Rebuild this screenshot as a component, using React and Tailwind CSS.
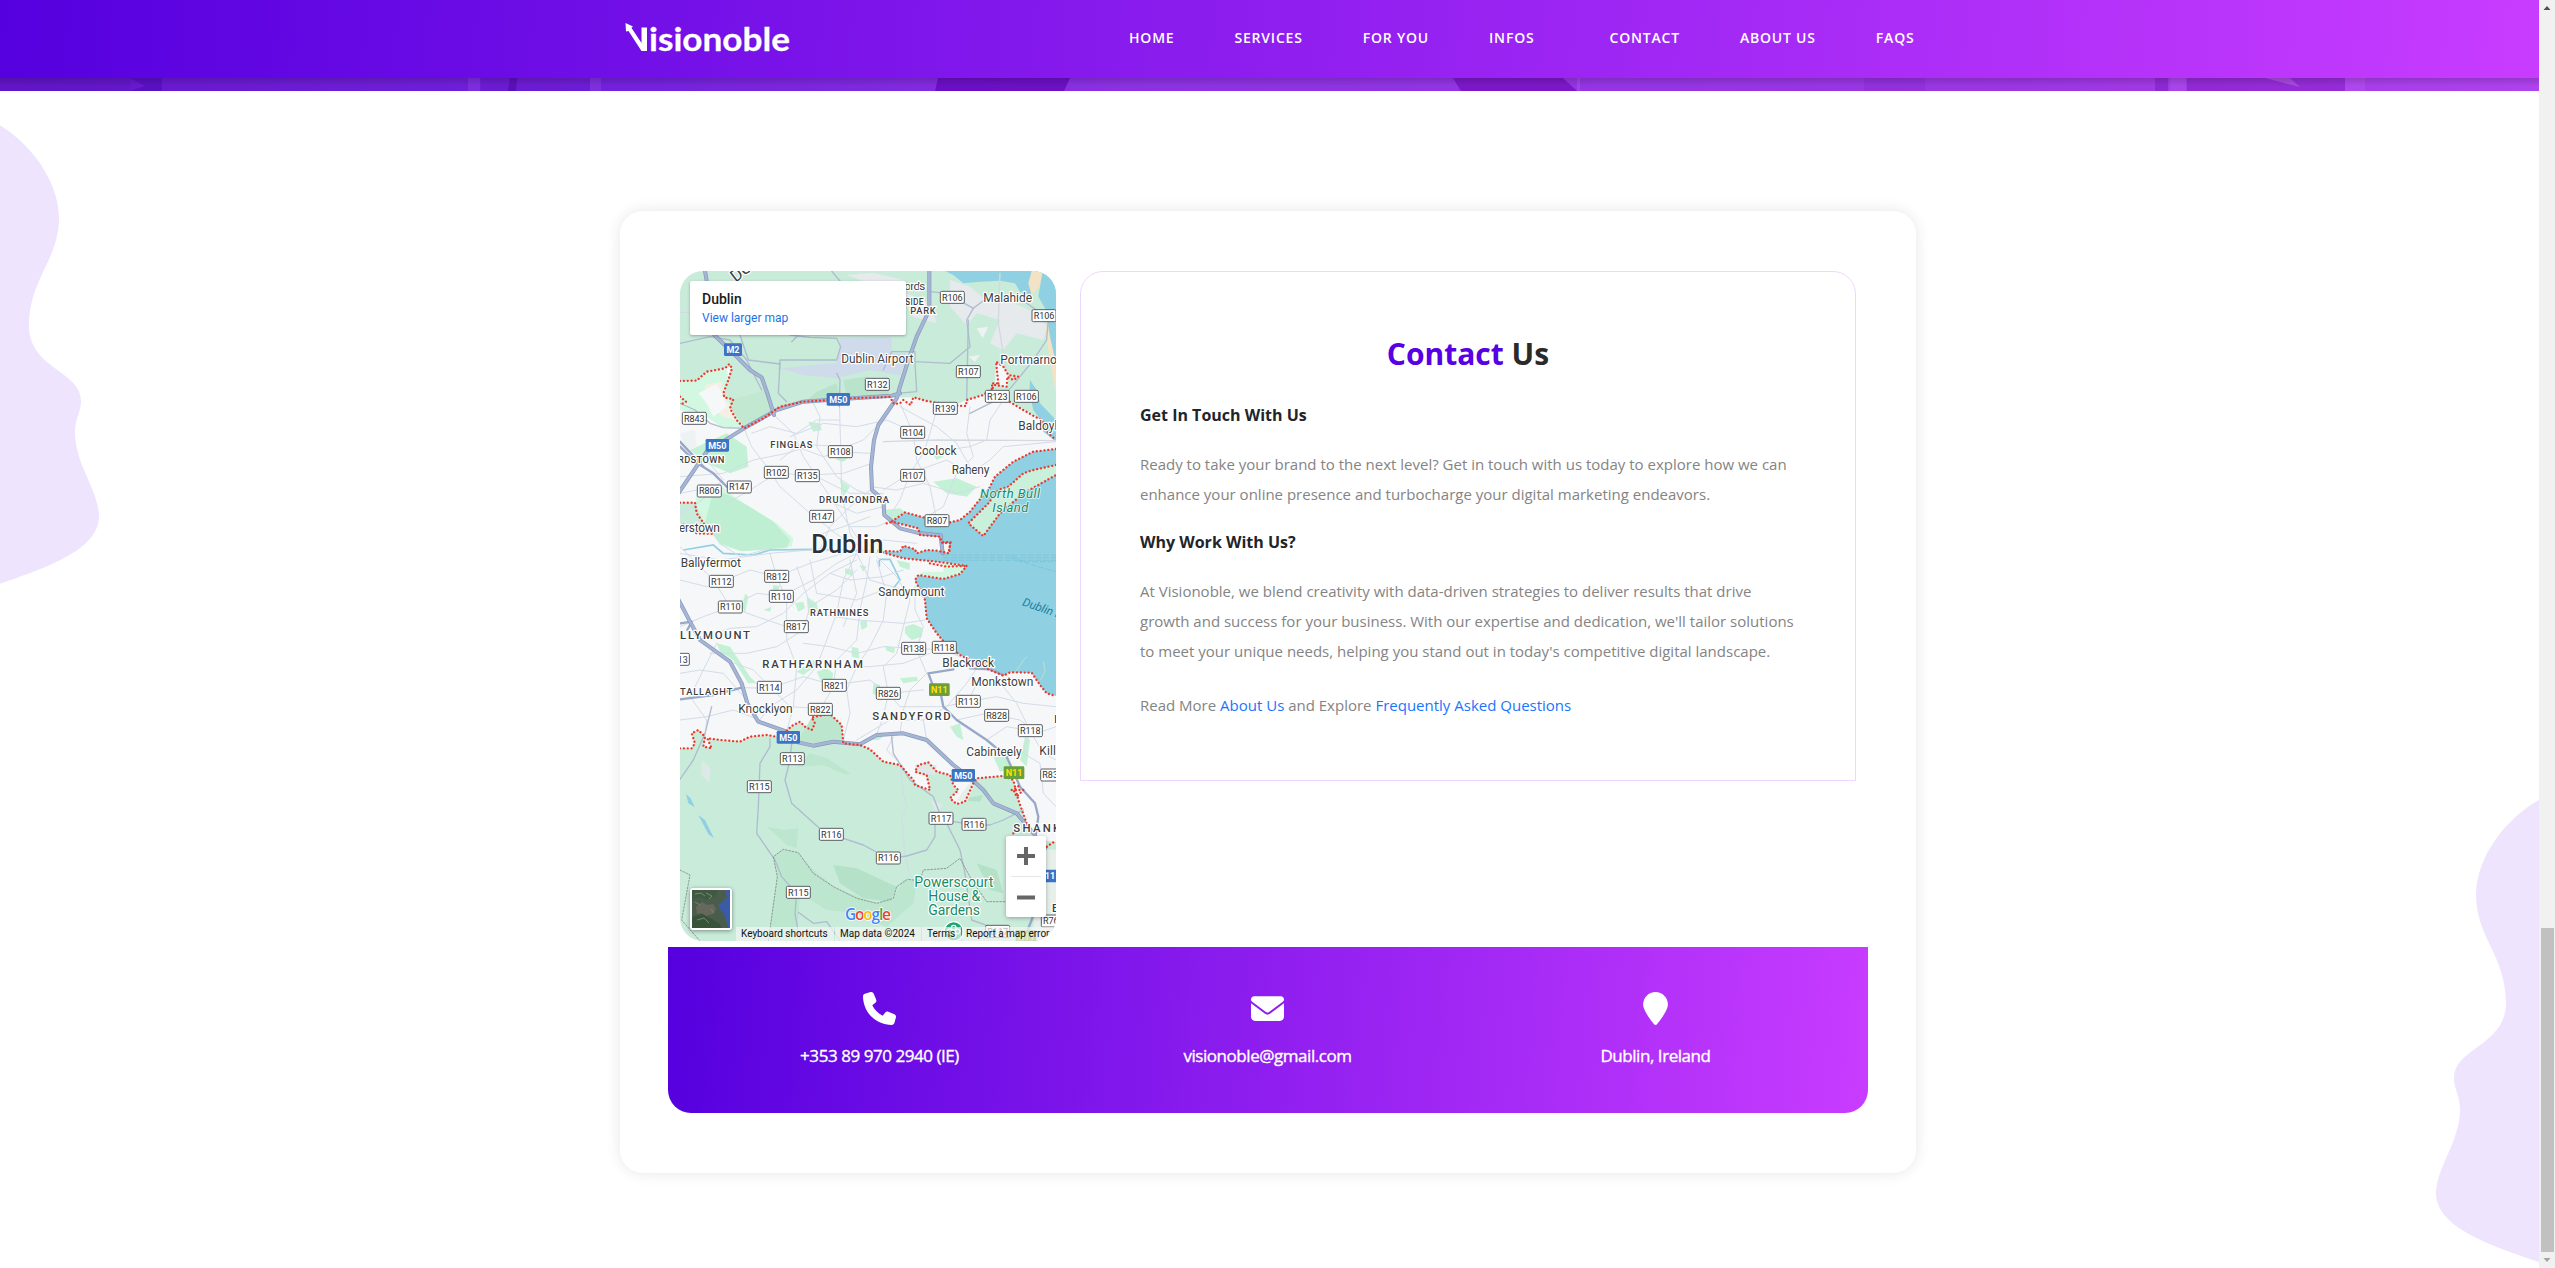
import React from "react";
import { FaPhone, FaEnvelope, FaLocationPin } from "react-icons/fa6";

const NAV = ["HOME", "SERVICES", "FOR YOU", "INFOS", "CONTACT", "ABOUT US", "FAQS"];

const ROUTES = [
  [847, 112, "R106"], [1122, 167, "R106"], [895, 335, "R107"], [622, 373, "R132"],
  [982, 409, "R123"], [1069, 409, "R106"], [826, 445, "R139"], [73, 475, "R843"],
  [728, 517, "R104"], [511, 575, "R108"], [319, 637, "R102"], [412, 647, "R135"],
  [728, 646, "R107"], [118, 693, "R806"], [208, 681, "R147"], [455, 769, "R147"],
  [801, 782, "R807"], [320, 949, "R812"], [154, 964, "R112"], [334, 1009, "R110"],
  [181, 1041, "R110"], [379, 1100, "R817"], [731, 1165, "R138"], [823, 1162, "R118"],
  [22, 1198, "R113"], [298, 1282, "R114"], [493, 1276, "R821"], [655, 1300, "R826"],
  [895, 1324, "R113"], [451, 1348, "R822"], [980, 1366, "R828"], [1081, 1412, "R118"],
  [367, 1496, "R113"], [268, 1580, "R115"], [1148, 1545, "R837"], [813, 1675, "R117"],
  [912, 1693, "R116"], [484, 1723, "R116"], [655, 1794, "R116"], [385, 1897, "R115"],
  [1150, 1983, "R761"], [983, 2014, "R117"],
];

const MOTORWAYS = [
  [189, 269, "M2", 54], [505, 418, "M50", 70], [142, 556, "M50", 70],
  [355, 1432, "M50", 70], [880, 1546, "M50", 70], [1128, 1848, "M11", 70],
];

// text, left, width, vertical centre, size
const TOWNS = [
  ["ords", 703, 63, 76, 35], ["Malahide", 940, 146, 112, 36], ["Dublin Airport", 514, 216, 296, 36],
  ["Portmarnock", 991, 206, 298, 36], ["Baldoyle", 1045, 136, 497, 36], ["Coolock", 733, 127, 571, 36],
  ["Raheny", 845, 113, 628, 36], ["erstown", 27, 123, 802, 36], ["Ballyfermot", 32, 181, 907, 36],
  ["Sandymount", 625, 198, 994, 36], ["Blackrock", 817, 155, 1209, 36], ["Monkstown", 904, 186, 1264, 36],
  ["Knocklyon", 205, 163, 1347, 36], ["Cabinteely", 889, 166, 1475, 36], ["Killiney", 1108, 116, 1472, 36],
];
const DISTRICTS = [
  ["SIDE", 705, 56, 126, 26], ["PARK", 721, 76, 153, 28], ["FINGLAS", 301, 126, 555, 28],
  ["RDSTOWN", 24, 139, 600, 28], ["DRUMCONDRA", 447, 210, 720, 28], ["RATHMINES", 420, 175, 1057, 28],
  ["LLYMOUNT", 30, 210, 1126, 34], ["RATHFARNHAM", 277, 302, 1212, 34], ["TALLAGHT", 30, 157, 1296, 28],
  ["SANDYFORD", 607, 235, 1368, 34], ["SHANKILL", 1030, 208, 1705, 34], ["BRAY", 1146, 100, 1943, 34],
  ["D", 1153, 24, 1377, 34],
];

const COAST =
  "M1158 567L1090 575L1030 605L975 650L955 690L940 705L900 755L870 780L840 787L770 775L705 757L665 785L745 805L750 825L810 830L815 848L840 850L838 880L800 872L770 870L740 880L735 868L700 857L690 875L620 872L700 895L800 905L890 918L870 942L820 957L745 945L735 960L765 1020L770 1075L800 1120L830 1155L870 1185L960 1230L1000 1247L1020 1237L1085 1238L1110 1275L1130 1300L1158 1308";
const BULL = "M1158 615L1090 630L1060 640L1015 680L985 690L955 730L895 790L940 828L990 760L1060 700L1158 645";
const SOUTH_EDGE =
  "M30 1465L65 1465L75 1450L65 1420L85 1410L105 1430L100 1460L125 1465L112 1435L150 1440L210 1445L240 1430L290 1425L330 1432L365 1398L390 1385L405 1400L425 1410L435 1390L425 1372L480 1362L515 1395L520 1450L570 1455L600 1468L640 1505L690 1515L730 1560L735 1575L780 1590L770 1545L735 1535L745 1515L775 1507L800 1535L840 1545L850 1575L865 1590L840 1615L860 1632L885 1625L910 1570L920 1555L1000 1548L1030 1560L1045 1620L1070 1690";
const NORTH_EDGE =
  "M30 363L80 362L110 335L165 325L178 312L186 325L175 360L160 400L163 412L190 418L180 445L200 480L222 505L280 475L330 440L400 425L470 421L540 415L660 411L672 432L690 430L700 420L722 435L730 412L770 423L850 437L888 438L890 420L940 405L968 385L965 370L985 370";

const MAJOR = [
  "M25 700L110 575L222 505L320 450L400 425L505 418L665 407L690 400",
  "M105 33L125 150L133 225L200 290L240 330L275 352L292 400L312 465",
  "M778 33L778 150L740 230L712 310L690 380L680 415L625 495L612 540L603 620L606 690L640 720L643 765L690 805L750 820L812 826L818 880",
  "M25 1018L60 1085L90 1140L180 1205L215 1270L232 1330L265 1385L350 1415L385 1447L430 1457L490 1445L570 1453L620 1425L700 1420L770 1440L850 1515L900 1553L940 1590L970 1630L1040 1660L1095 1725",
];
const MEDIUM = [
  "M850 1228L775 1240L790 1280L812 1300L820 1340L860 1380L950 1440L1010 1490L1050 1580L1095 1630L1105 1670L1095 1740",
  "M30 1318L130 1305L215 1283", "M30 560L75 605L130 640L170 680", "M30 545L100 620",
  "M900 1225L960 1228L1000 1245", "M1130 1760L1110 1800L1120 1860L1085 1980L1060 2043", "M30 1090L65 1085L52 1110",
];
const REGIONAL = [
  "M30 250L120 230L180 240L230 300L275 390", "M210 225L235 300L330 312", "M360 225L420 232L500 235L512 260L500 300L330 300L328 330",
  "M330 310L325 400L350 425", "M365 245L400 210L445 170L540 180", "M680 400L740 395L735 310L735 275L665 275L640 330",
  "M735 305L840 310L900 260L890 180L910 145L830 100L780 95", "M910 145L950 115L1040 110L1100 150L1135 175L1130 240L1090 300L1050 350L1000 410L900 460",
  "M895 180L890 420", "M30 430L75 450L120 490L160 503L222 505", "M485 33L520 75M500 340L510 360L508 440",
  "M300 1435L300 1460L270 1510L265 1640L260 1720L315 1800L335 1850L380 1900L375 1960L390 2043",
  "M365 1450L360 1500L345 1560L365 1630L460 1715L580 1755L655 1795L710 1788L770 1770L795 1730L795 1670L830 1690L870 1770L885 1840L905 1980L960 2000",
  "M665 1430L670 1480L720 1560L790 1610L813 1670L850 1685L900 1692L960 1695L1000 1680L1060 1650",
  "M30 1558L70 1500L105 1420L125 1340", "M385 1957L430 1990L470 1985L510 2043",
];
const STREETS = [
  "M222 505L245 560L290 620L330 680L420 760L510 830L570 860", "M312 465L370 520L400 590L440 650L500 740L560 830", "M508 420L512 560L515 700L540 820L570 870",
  "M620 500L580 540L530 560L430 555L350 580L250 600L160 640L30 650", "M605 610L520 640L420 645L320 640L240 690L170 730", "M730 515L650 480L560 500L460 490L360 530",
  "M690 430L730 520L740 600L780 680L800 780", "M640 690L720 640L830 600L900 640L960 600L1000 560L1158 545", "M690 440L800 500L860 550L900 620L940 650",
  "M600 680L680 690L760 670L860 700L930 680", "M800 450L780 520L760 580L720 640L690 720L650 780", "M900 440L890 520L910 590L860 640L820 740L770 770",
  "M1000 420L960 480L950 540L900 560L830 570", "M30 880L150 900L300 880L420 870L560 875L640 880", "M110 790L150 850L210 890L300 865",
  "M30 960L110 980L154 965L240 930L320 950L420 910L520 880", "M30 860L70 900L130 960L180 1040L260 1070L350 1100", "M30 1100L100 1070L181 1041L260 1000L334 1008L430 960L500 910L560 880",
  "M90 1140L180 1105L260 1100L340 1060L400 1000L480 940L560 900", "M120 1180L230 1180L320 1160L400 1110L420 1040L500 990L560 930", "M180 1205L250 1230L300 1280L360 1340L440 1345",
  "M215 1283L300 1285L400 1250L490 1275L600 1260L655 1300L760 1290", "M265 1385L300 1340L380 1290L440 1220L470 1140L500 1060L520 960L560 880", "M350 1415L370 1340L380 1220L350 1140L350 1020L320 950L300 880",
  "M451 1348L490 1280L500 1200L560 1140L570 1050L590 960L600 890", "M520 1440L540 1360L530 1290L560 1220L600 1160L640 1080L650 1000L620 900", "M620 1423L640 1370L655 1300L640 1220L680 1180L700 1100L720 1020L680 950L620 890",
  "M690 1420L700 1350L720 1290L770 1240L740 1170L760 1100L735 1050L735 980", "M420 900L440 1000L560 1020L640 990L735 985", "M380 920L430 1060L560 1080L700 1090L765 1080",
  "M400 1150L480 1160L560 1180L640 1160L731 1165L823 1170L870 1190", "M30 1240L90 1230L160 1240L230 1320", "M140 1150L90 1250L60 1310L110 1380L105 1430",
  "M560 870L640 840L740 850M540 800L620 800L690 770M440 650L540 700L640 700", "M470 720L560 760L640 740M430 830L520 800L600 770M450 870L480 800L540 740L600 690",
  "M560 880L600 960L700 990M540 900L560 1000L520 1100M480 940L540 960L640 950L700 930", "M820 1340L900 1324L980 1310L1060 1330L1158 1340", "M860 1380L950 1360L1050 1380L1100 1420L1158 1400",
  "M950 1440L1010 1400L1080 1412L1120 1480L1158 1500", "M1010 1490L1060 1480L1110 1510L1120 1600L1158 1640", "M895 1324L920 1270L1000 1280L1040 1330L1080 1412L1060 1480",
  "M770 1440L760 1380L830 1340L890 1270L920 1225", "M560 1440L660 1380L760 1380M30 1380L110 1370L190 1350L270 1380", "M700 1520L650 1470L670 1430",
  "M30 700L80 690L118 693L160 660L110 600L60 600", "M30 760L70 740L120 700M245 520L300 500L380 520L440 480L508 480", "M330 600L380 560L460 590L511 575L600 580",
  "M640 720L560 690L500 650L440 560L450 470L430 430", "M780 1180L700 1210L600 1220L560 1220M655 1300L690 1340L820 1340", "M690 1515L700 1600L710 1640L695 1680L705 1780L720 1850",
];
const PARKS = [
  "M415 485L450 490L455 510L430 515Z", "M500 580L530 570L540 590L520 605L500 600Z", "M790 665L860 655L920 680L890 710L830 700Z", "M640 750L690 745L710 760L670 785Z",
  "M410 1010L440 1030L445 1055L415 1065Z", "M375 1030L400 1025L405 1045L385 1055Z", "M705 1100L730 1092L758 1105L755 1130L725 1140L705 1120Z", "M525 925L550 930L545 948L525 940Z", "M568 915L590 920L580 935Z",
  "M545 1160L565 1165L568 1195L545 1190Z", "M570 1085L590 1080L592 1100L575 1110Z", "M645 1157L675 1165L672 1180L650 1172Z", "M440 1235L470 1225L490 1240L485 1270L455 1265Z",
  "M610 1270L630 1275L625 1310L608 1300Z", "M310 975L330 978L325 992L308 990Z", "M225 1000L235 1010L225 1060L218 1040Z", "M140 1150L180 1160L240 1250L260 1270L235 1270L190 1200L150 1175Z",
  "M600 1440L620 1420L640 1430L625 1440Z", "M970 1490L1010 1490L1030 1525L990 1535Z", "M690 1255L740 1250L745 1262L700 1270Z", "M790 585L815 575L820 590L800 600Z",
  "M60 570L170 520L230 560L235 620L180 640L110 610Z", "M380 1235L430 1200L440 1215L400 1245Z", "M840 1400L870 1390L880 1440L860 1430Z", "M1065 1430L1080 1440L1070 1520L1050 1500Z", "M510 660L540 680L520 710Z", "M280 1050L305 1040L300 1055Z",
  "M680 900L720 910L718 930L690 920Z",
];

function MapText({ items, className, haloWidth = 7 }) {
  return items.map(([text, x, w, y, size]) => (
    <text
      key={text + x + y}
      x={x}
      y={y + size * 0.36}
      fontSize={size}
      textLength={w}
      strokeWidth={haloWidth}
      className={className}
    >
      {text}
    </text>
  ));
}

function CityMap() {
  return (
    <svg viewBox="30 33 1128 2010" className="block h-full w-full font-['Roboto',sans-serif]">
      <rect x="30" y="33" width="1128" height="2010" fill="#f6f7f8" />
      {/* northern countryside */}
      <path
        d="M30 33H1158V520L1100 470L1030 430L985 400L940 405L890 420L850 437L770 423L730 412L540 415L400 425L330 440L222 505L180 445L160 410L185 320L110 335L80 362L30 363Z"
        fill="#c9ebda"
      />
      <path d="M30 363L80 362L110 335L170 325L175 360L160 410L185 420L222 505L160 505L110 470L30 450Z" fill="#d2f8e1" />
      <path d="M105 375L155 365L160 410L185 440L200 480L160 470L110 430Z" fill="#f5f0e6" />
      <path d="M85 400L140 372L155 400L170 440L130 470L110 430Z" fill="#f6f7f8" />
      <path d="M180 420L290 390L310 450L222 500L180 440Z" fill="#c2e8d2" />
      <path d="M330 325L460 312L500 310L512 235L660 230L690 270L715 285L690 345L600 330L500 355L400 345Z" fill="#cfdaea" />
      <path d="M665 230L700 245L730 250L715 280L665 280ZM330 300L370 300L380 320L330 318Z" fill="#c9ebda" />
      <path d="M400 430L440 395L500 370L510 415ZM520 360L590 350L650 380L660 405L530 412Z" fill="#b9e3ca" />
      <path d="M530 45L610 38L700 60L710 100L780 130L800 190L730 170L690 110L600 70ZM840 60L900 80L960 130L1010 120L1100 160L1130 200L1120 240L1040 220L1000 270L960 250L990 180L920 160L890 195L840 140Z" fill="#e6eaed" />
      <path d="M920 205L955 200L938 235ZM895 290L930 285L915 305ZM30 520L75 510L80 560L50 570Z" fill="#edf2f3" />
      <path d="M825 33H1115L1105 75L1080 105L1050 95L1035 70L990 62L930 65L880 70L850 45Z" fill="#90d0e3" />
      <path d="M1085 33H1120L1108 80L1085 105L1075 70ZM1125 180L1145 240L1158 330V400L1145 330L1130 240Z" fill="#f3e2c4" />
      <path d="M1118 33H1158V310L1140 230L1128 150L1105 110Z" fill="#90d0e3" />
      <path d="M1080 360L1100 390L1110 430L1158 480V545L1120 515L1105 470L1090 450L1078 400Z" fill="#90d0e3" />
      <path d="M978 305L1000 320L1015 345L1012 380L975 375Z" fill="#f6f7f8" />
      {/* parkland inside the city */}
      <path d="M80 690L150 675L180 700L230 735L320 790L370 835L365 860L210 873L150 855L110 800L75 740Z" fill="#d2f8e1" />
      <path d="M125 710L165 700L230 735L310 785L360 840L350 864L215 874L150 850L105 790Z" fill="#bfefd2" />
      <path d="M30 728L75 728L105 795L130 822L80 820L30 790Z" fill="#c9ebda" />
      {PARKS.map((d) => (
        <path key={d} d={d} fill="#c3f1d5" />
      ))}
      {/* southern mountains */}
      <path d={SOUTH_EDGE + "L1095 1740L1158 1745V2043H30Z"} fill="#c9ebda" />
      <path d="M425 1372L480 1362L515 1395L520 1450L440 1450L385 1440Z" fill="#bce6cd" />
      <path d="M380 1520L420 1480L470 1495L540 1540L530 1545L460 1515ZM290 1700L345 1710L385 1705L380 1765L350 1755L330 1735Z" fill="#bce6cd" />
      <path d="M310 1790L340 1768L385 1778L430 1830L500 1885L620 1930L670 1915L700 1860L740 1860L730 1930L650 2000L560 1960L470 1950L390 1900L380 2043H295L322 1850Z" fill="#bce6cd" />
      <path d="M490 1815L560 1825L680 1880L660 1925L580 1915L510 1870ZM920 1810L980 1830L1000 1900L960 1890ZM860 1620L940 1605L930 1625Z" fill="#b4e1c8" />
      <path d="M95 1500L122 1525L118 1570L94 1545ZM780 1620L820 1635L800 1660ZM735 1515L800 1515L795 1545L740 1540Z" fill="#dde9e6" />
      <path d="M860 1620L905 1560L915 1570L890 1628ZM1040 1760L1158 1770V2043H1080L1120 1850Z" fill="#e6efea" />
      <path d="M48 1602L62 1615L74 1642L55 1630ZM85 1665L105 1680L132 1735L115 1722Z" fill="#90d0e3" />
      {/* sea */}
      <path d={COAST + "V567Z"} fill="#90d0e3" />
      <path d={BULL + "Z"} fill="#c9f0da" />
      <path d="M820 905L890 918L870 942L820 957L745 945L760 935L820 935Z" fill="#d2f8e1" />
      <path d="M640 877L740 895L820 900M40 870L130 855L160 880L250 885L300 870L420 868L600 872M628 898H660L690 960L670 985M628 898V920" fill="none" stroke="#90d0e3" strokeWidth="5" />
      <path d="M1035 1240L1060 1200L1072 1190M1120 1205L1125 1235L1110 1262" fill="none" stroke="#b9dfd5" strokeWidth="3" />
      <path d="M820 885H1158M820 893H1158M820 901H1158M1020 885L1070 910L1158 935M1020 893L1050 905L1158 905" fill="none" stroke="#72c1d8" strokeWidth="2" strokeDasharray="18 5" />
      {/* roads */}
      <g fill="none" strokeLinejoin="round" strokeLinecap="round">
        {STREETS.map((d) => (
          <path key={d} d={d} stroke="#d3dce8" strokeWidth="3" />
        ))}
        {REGIONAL.map((d) => (
          <path key={d} d={d} stroke="#afbccf" strokeWidth="4" />
        ))}
        {MEDIUM.map((d) => (
          <path key={d} d={d} stroke="#98a8c9" strokeWidth="7" />
        ))}
        {MAJOR.map((d) => (
          <path key={d} d={d} stroke="#8797bb" strokeWidth="12" />
        ))}
        {MAJOR.map((d) => (
          <path key={d} d={d} stroke="#a5b5d4" strokeWidth="8" />
        ))}
        <path d="M990 40L985 190L1000 280L1010 330M30 157H60M640 545L800 540L1158 542" stroke="#d5d9df" strokeWidth="4" />
        {/* dashed park limits */}
        <path d="M30 1830L60 1845L35 1980L90 2043M295 2043L322 1850L310 1790L340 1768L385 1778L430 1840L490 1880L560 1915L620 1930L670 1915L680 1880L712 1858L750 1862L760 1830L830 1825L870 1795L905 1860L950 1925L1008 1925" stroke="#7d8a87" strokeWidth="2.5" strokeDasharray="5 5" />
        {/* county limits */}
        <g stroke="#ea3a2e" strokeWidth="7" strokeDasharray="0.1 11.5">
          <path d={NORTH_EDGE} />
          <path d={COAST} />
          <path d={BULL} />
          <path d={SOUTH_EDGE} />
          <path d="M985 370L978 305L1000 320L1015 345L1045 350L1030 360L1012 350L1010 380L975 375L960 395L1010 420L1060 450L1095 470L1115 480L1135 520L1158 540" />
          <path d="M30 410L48 425L30 435M30 728L75 728L80 760L105 795L130 822L80 820L30 788" />
          <path d="M650 790L670 785M780 910L830 920L890 918M820 847L842 846L835 880M1025 1590L1060 1590L1040 1610L1030 1590L1050 1575M1030 1720L1040 1695M1130 1760L1158 1742" />
        </g>
      </g>
      {/* visitor pin of the gardens */}
      <circle cx="851" cy="2014" r="29" fill="#1ea672" stroke="#fff" strokeWidth="4" />
      <g fill="none" stroke="#fff" strokeWidth="4">
        <circle cx="851" cy="2003" r="7" />
        <circle cx="839" cy="2014" r="7" />
        <circle cx="863" cy="2014" r="7" />
        <circle cx="851" cy="2025" r="7" />
      </g>
      {/* labels */}
      <g strokeLinejoin="round">
        <text x="197" y="68" fontSize="50" transform="rotate(-38 197 68)" className="fill-[#3c4043] stroke-white [paint-order:stroke]" strokeWidth="7">DU</text>
        <MapText items={TOWNS} className="fill-[#3c4043] stroke-white [paint-order:stroke]" />
        <MapText items={DISTRICTS} className="fill-[#3c4043] stroke-white font-medium [paint-order:stroke]" />
        <MapText
          items={[["Dublin", 424, 216, 852, 76]]}
          className="fill-[#2d3136] stroke-white font-medium [paint-order:stroke]"
        />
        <MapText
          items={[["North Bull", 930, 180, 699, 39], ["Island", 967, 108, 741, 39]]}
          className="fill-[#17896b] stroke-[#dff5f3] italic [paint-order:stroke]"
          haloWidth={5}
        />
        <MapText
          items={[["Powerscourt", 733, 237, 1867, 42], ["House &", 775, 156, 1908, 42], ["Gardens", 775, 155, 1951, 42]]}
          className="fill-[#1b8a63] stroke-white [paint-order:stroke]"
        />
        <text x="1055" y="1036" fontSize="35" transform="rotate(19 1055 1036)" className="fill-[#1c809c] italic">Dublin Bay</text>
      </g>
      {ROUTES.map(([x, y, t]) => (
        <g key={t + x + y}>
          <rect x={x - 36} y={y - 18} width="72" height="36" rx="4" fill="#fff" stroke="#5b5f64" strokeWidth="3" />
          <text x={x} y={y + 10} fontSize="27" textAnchor="middle" fill="#303438">{t}</text>
        </g>
      ))}
      {MOTORWAYS.map(([x, y, t, w]) => (
        <g key={t + x + y}>
          <rect x={x - w / 2} y={y - 19} width={w} height="38" rx="4" fill="#3b73c5" />
          <text x={x} y={y + 10} fontSize="27" fontWeight="700" textAnchor="middle" fill="#fff">{t}</text>
        </g>
      ))}
      {[[808, 1289], [1032, 1538], [1068, 2030]].map(([x, y]) => (
        <g key={x + "n" + y}>
          <rect x={x - 31} y={y - 19} width="62" height="38" rx="4" fill="#6b9f3c" />
          <text x={x} y={y + 10} fontSize="27" fontWeight="700" textAnchor="middle" fill="#ffe100">N11</text>
        </g>
      ))}
    </svg>
  );
}

function SatelliteThumb() {
  return (
    <svg viewBox="0 0 38 38" className="block h-full w-full">
      <rect width="38" height="38" fill="#4a5d4c" />
      <path d="M0 0H26L24 6L14 10L8 7L0 10Z" fill="#405a42" />
      <path d="M4 17L10 12L15 15L21 14L24 19L21 24L14 26L10 23L5 24Z" fill="#66685c" />
      <path d="M0 27L10 24L20 29L28 34L29 38H0Z" fill="#36543a" />
      <path d="M3 4L9 3L13 6M14 3L20 6L17 9M5 30L12 28L17 33M3 12L8 15M19 19L22 23" stroke="#778771" strokeWidth="1" fill="none" />
      <path d="M38 0H33L35 7L31 12L26 15L29 21L32 24L34 30L36 38H38Z" fill="#3c5ba6" />
    </svg>
  );
}

function MapFrame() {
  return (
    <div className="relative h-[670px] w-[376px] overflow-hidden rounded-[23px] font-['Roboto',sans-serif]">
      <CityMap />
      <div className="absolute left-[10px] top-[10px] h-[54px] w-[216px] rounded-[2px] bg-white pl-3 pt-[9px] shadow-[0_1px_3px_rgba(0,0,0,0.3)]">
        <div className="text-[14px] font-medium leading-[18px] text-[#1a1a1a]">Dublin</div>
        <div className="mt-px text-[12px] leading-[19px] text-[#1a73e8]">View larger map</div>
      </div>
      <div className="absolute bottom-[11px] left-[10px] h-[42px] w-[42px] rounded-[3px] border-2 border-white bg-white shadow-[0_1px_4px_rgba(0,0,0,0.4)]">
        <SatelliteThumb />
      </div>
      <div className="absolute bottom-6 right-[10px] flex h-[81px] w-10 flex-col items-center rounded-[2px] bg-white shadow-[0_1px_4px_rgba(0,0,0,0.3)]">
        <svg viewBox="0 0 40 40" className="h-10 w-10 fill-[#666]">
          <path d="M18 11h4v7h7v4h-7v7h-4v-7h-7v-4h7z" />
        </svg>
        <div className="h-px w-[30px] bg-[#e6e6e6]" />
        <svg viewBox="0 0 40 40" className="h-10 w-10 fill-[#666]">
          <path d="M11 18.5h18v4H11z" />
        </svg>
      </div>
      <svg viewBox="0 0 50 20" className="absolute bottom-[16px] left-[164px] h-5 w-[50px] font-['Open_Sans',sans-serif]">
        <text y="15" x="1" fontSize="15.5" fontWeight="600" textLength="46" stroke="#fff" strokeWidth="1.5" className="[paint-order:stroke]">
          <tspan fill="#4285f4">G</tspan>
          <tspan fill="#ea4335">o</tspan>
          <tspan fill="#fbbc04">o</tspan>
          <tspan fill="#4285f4">g</tspan>
          <tspan fill="#34a853">l</tspan>
          <tspan fill="#ea4335">e</tspan>
        </text>
      </svg>
      <div className="absolute bottom-0 right-0 flex h-[14px] w-[320px] whitespace-nowrap text-[10px] leading-[14px] text-[#111]">
        <div className="w-[98px] bg-[#f5f5f5]/70 pl-[5px]">Keyboard shortcuts</div>
        <div className="ml-px w-[86px] bg-[#f5f5f5]/70 pl-[5px]">Map data ©2024</div>
        <div className="ml-px w-[39px] bg-[#f5f5f5]/70 pl-[5px]">Terms</div>
        <div className="ml-px flex-1 bg-[#f5f5f5]/70 pl-1">Report a map error</div>
      </div>
    </div>
  );
}

function Logo() {
  return (
    <svg viewBox="0 0 168 34" className="block h-[34px] w-[168px] fill-white font-['Lato',sans-serif]" role="img" aria-label="Visionoble">
      <path d="M0.5 0L8 3.5L6.4 4.8L16.5 20V4.5H22V28H16.5L3.5 8L1 8.5Z" />
      <text x="24" y="27.7" fontSize="32.5" fontWeight="700" textLength="141" lengthAdjust="spacingAndGlyphs" className="stroke-white" strokeWidth="0.3">isionoble</text>
    </svg>
  );
}

function HeroStrip() {
  return (
    <div className="relative h-[13px] w-full overflow-hidden bg-[linear-gradient(90deg,#6417cc,#7321dc_25%,#8c31e2_45%,#9334e3_60%,#9c36e2_80%,#ae42ed)]">
      <svg viewBox="0 0 2539 13" preserveAspectRatio="none" className="block h-full w-full">
        <path d="M0 0H130V13H0Z" fill="#4e0db0" opacity=".2" />
        <path d="M130 0H162V13H130L145 8Z" fill="#4b07b4" opacity=".5" />
        <path d="M468 0H480V13H468ZM590 0H601V13H590Z" fill="#a15af0" opacity=".25" />
        <path d="M481 0H590V13H481Z" fill="#5c0fc0" opacity=".2" />
        <path d="M510 0H517L516 13H508Z" fill="#4a069e" opacity=".5" />
        <path d="M938 0H1070L1064 13H935Z" fill="#6409bc" opacity=".8" />
        <path d="M1453 0H1563L1577 13H1461Z" fill="#7610c0" opacity=".8" />
        <path d="M1577 0H1580V13H1577Z" fill="#b866f2" opacity=".3" />
        <path d="M1864 0H1925V13H1864Z" fill="#7d22c8" opacity=".25" />
        <path d="M2155 0H2168V13H2155Z" fill="#7417bb" opacity=".45" />
        <path d="M2170 0H2186V13H2170Z" fill="#b75af2" opacity=".35" />
        <path d="M2187 0H2345V13H2187Z" fill="#7e17c0" opacity=".45" />
        <path d="M2265 0H2290L2300 9Z" fill="#c070ec" opacity=".45" />
        <path d="M2345 0H2365V13H2345Z" fill="#c468f3" opacity=".25" />
      </svg>
      <div className="absolute inset-x-0 top-0 h-2 bg-gradient-to-b from-black/15 to-transparent" />
    </div>
  );
}

function InfoItem({ icon, children }) {
  return (
    <div className="flex w-[388px] flex-col items-center">
      <div className="h-8 text-[33px] leading-none">{icon}</div>
      <div className="mt-[17px] text-[17px] leading-[30px] tracking-[-0.45px] [-webkit-text-stroke:0.35px_white]">{children}</div>
    </div>
  );
}

function Scrollbar() {
  return (
    <div className="flex h-full w-4 flex-col items-center bg-[#f1f1f1]">
      <svg viewBox="0 0 16 16" className="h-4 w-4 fill-[#505050]"><path d="M4.5 10h7L8 6z" /></svg>
      <div className="mt-[912px] h-[324px] w-[13px] bg-[#c1c1c1]" />
      <svg viewBox="0 0 16 16" className="h-4 w-4 fill-[#a3a3a3]"><path d="M4.5 6h7L8 10z" /></svg>
    </div>
  );
}

const BLOB =
  "M103 2C71 20 41 57 40 96C40 140 70 157 70 206C69 248 18 250 18 280C18 292 24 296 24 313C23 345 0 370 0 396C1 430 56 448 103 464Z";

export default function App() {
  return (
    <div className="flex h-[1268px] w-[2555px] overflow-hidden bg-white font-['Open_Sans',sans-serif]">
      <div className="relative flex h-full w-[2539px] flex-col items-start overflow-hidden">
        <svg viewBox="0 0 103 468" className="absolute -left-1 top-[121px] h-[468px] w-[103px] -scale-x-100">
          <path d={BLOB} fill="#eee4fd" />
        </svg>
        <svg viewBox="0 0 103 468" className="absolute right-0 top-[798px] h-[468px] w-[103px]">
          <path d={BLOB} fill="#eee4fd" />
        </svg>

        <header className="relative flex h-[78px] w-full shrink-0 items-start bg-[linear-gradient(95deg,#5500df_0%,#c83cff_100%)] pl-[625px]">
          <div className="pt-[23px]">
            <Logo />
          </div>
          <nav className="ml-[336px] flex gap-[60px] pt-[28px] text-[14px] leading-5 text-white font-semibold tracking-[0.8px]">
            {NAV.map((n) => (
              <a key={n} className={n === "INFOS" ? "mr-[15px]" : ""}>{n}</a>
            ))}
          </nav>
        </header>
        <HeroStrip />

        <section className="relative ml-[620px] mt-[120px] h-[962px] w-[1296px] rounded-[23px] bg-white shadow-[0_0_15px_rgba(0,0,0,0.1)]">
          <div className="flex items-start gap-6 pl-[60px] pt-[60px]">
            <MapFrame />
            <div className="h-[510px] w-[776px] rounded-t-[23px] border border-[#f0d6ff] px-[59px] pt-[64px]">
              <h2 className="text-center text-[30px] font-bold leading-9 text-[#2a2a2a]">
                <span className="text-[#5600e3]">Contact</span> Us
              </h2>
              <h3 className="mt-[33px] text-[16px] font-bold leading-5 text-[#212529]">Get In Touch With Us</h3>
              <p className="mt-[24px] w-[656px] text-[15px] leading-[30px] text-[#848484]">
                Ready to take your brand to the next level? Get in touch with us today to explore how we can
                enhance your online presence and turbocharge your digital marketing endeavors.
              </p>
              <h3 className="mt-[23px] text-[16px] font-bold leading-5 text-[#212529]">Why Work With Us?</h3>
              <p className="mt-[24px] w-[660px] text-[15px] leading-[30px] text-[#848484]">
                At Visionoble, we blend creativity with data-driven strategies to deliver results that drive
                growth and success for your business. With our expertise and dedication, we'll tailor solutions
                to meet your unique needs, helping you stand out in today's competitive digital landscape.
              </p>
              <p className="mt-[24px] text-[15px] leading-[30px] text-[#848484]">
                Read More <a className="text-[#1a75fd]">About Us</a> and Explore{" "}
                <a className="text-[#1a75fd]">Frequently Asked Questions</a>
              </p>
            </div>
          </div>
          <div className="ml-12 mt-[6px] flex h-[166px] w-[1200px] justify-center rounded-b-[23px] bg-[linear-gradient(95deg,#5500df_0%,#c83cff_100%)] pr-[1px] pt-[45px] text-white">
            <InfoItem icon={<FaPhone />}>+353 89 970 2940 (IE)</InfoItem>
            <InfoItem icon={<FaEnvelope />}>visionoble@gmail.com</InfoItem>
            <InfoItem icon={<FaLocationPin />}>Dublin, Ireland</InfoItem>
          </div>
        </section>
      </div>
      <Scrollbar />
    </div>
  );
}
